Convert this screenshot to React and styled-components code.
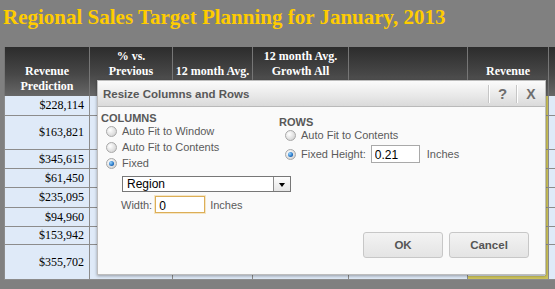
import React from 'react';
import styled, { createGlobalStyle, css } from 'styled-components';

const GlobalStyle = createGlobalStyle`
  html, body {
    margin: 0;
    padding: 0;
    background: #808080;
  }
`;

const Page = styled.div`
  position: relative;
  width: 555px;
  height: 289px;
  overflow: hidden;
  background: #808080;
`;

const Title = styled.h1`
  margin: 5px 0 0 3px;
  font: bold 21px/24px 'Liberation Serif', 'Times New Roman', serif;
  color: #ffcc00;
  white-space: nowrap;
`;

const Grid = styled.div`
  display: grid;
  grid-template-columns: 85px 83px 80px 96px 119px 81px 80px;
  grid-template-rows: 49px 20px 34px 19px 19px 20px 19px 18px 35px;
  width: max-content;
  margin: 18px 0 0 4px;
`;

const HeadCell = styled.div`
  display: flex;
  flex-direction: column;
  justify-content: flex-end;
  align-items: center;
  padding: 0 1px 2px;
  border-left: 1px solid #767676;
  background: linear-gradient(#2c2c2c, #474747 55%, #686868);
  color: #fff;
  font: bold 12px/15px 'Liberation Serif', 'Times New Roman', serif;
  white-space: nowrap;
  overflow: hidden;
`;

const Cell = styled.div`
  display: flex;
  align-items: center;
  justify-content: flex-end;
  padding-right: 5px;
  border-left: 1px solid #8c8c8c;
  border-bottom: 1px solid #8c8c8c;
  background: #dfeaf8;
  color: #000;
  font: 12px 'Liberation Serif', 'Times New Roman', serif;
  white-space: nowrap;
  ${(p) =>
    p.$selected &&
    css`
      box-shadow: inset -3px 0 0 #cfc55c ${p.$last ? ', inset 0 -3px 0 #cfc55c' : ''};
    `}
`;

const Dialog = styled.div`
  position: absolute;
  left: 97px;
  top: 80px;
  width: 449px;
  height: 195px;
  box-sizing: border-box;
  display: flex;
  flex-direction: column;
  background: #fafafa;
  border: 1px solid #bdbdbd;
  box-shadow: 0 1px 3px rgba(0, 0, 0, 0.35);
  font-family: 'Liberation Sans', Arial, sans-serif;
  color: #555;
`;

const TitleBar = styled.div`
  display: flex;
  align-items: center;
  height: 26px;
  box-sizing: border-box;
  padding-left: 5px;
  border-bottom: 1px solid #b9b9b9;
  background: linear-gradient(#fbfbfb, #e8e8e8 60%, #dadada);
`;

const DialogTitle = styled.div`
  flex: 1;
  font-size: 11.5px;
  font-weight: bold;
  color: #585858;
`;

const BarButton = styled.div`
  display: flex;
  align-items: center;
  justify-content: center;
  width: ${(p) => p.$w}px;
  height: 18px;
  border-left: 1px solid #c6c6c6;
  box-shadow: inset 1px 0 0 #fff;
  color: #6e6e6e;
  font-weight: bold;
  font-size: ${(p) => p.$size}px;
`;

const Body = styled.div`
  flex: 1;
  display: grid;
  grid-template-columns: 178px 1fr;
  padding: 6px 0 0 3px;
`;

const Section = styled.div`
  display: flex;
  flex-direction: column;
  padding-top: ${(p) => p.$offset || 0}px;
`;

const Heading = styled.div`
  font-size: 11px;
  line-height: 10px;
  height: 10px;
  font-weight: bold;
  color: #585858;
`;

const OptionRow = styled.label`
  display: flex;
  align-items: center;
  gap: 5px;
  height: ${(p) => p.$h || 16}px;
  margin-top: ${(p) => p.$mt || 0}px;
  padding-left: ${(p) => p.$indent}px;
  font-size: 11px;
  color: #5a5a5a;
  white-space: nowrap;
`;

const Radio = styled.span`
  position: relative;
  flex: none;
  width: 11px;
  height: 11px;
  box-sizing: border-box;
  border-radius: 50%;
  border: 1px solid #a8a8a8;
  background: radial-gradient(circle at 35% 35%, #ffffff, #dcdcdc 65%, #c4c4c4);
  ${(p) =>
    p.$checked &&
    css`
      &::after {
        content: '';
        position: absolute;
        inset: 2px;
        border-radius: 50%;
        background: radial-gradient(circle at 35% 35%, #9ad6ff, #1a6cc0 65%, #0b3d7a);
      }
    `}
`;

const Select = styled.div`
  display: flex;
  width: 169px;
  height: 16px;
  box-sizing: border-box;
  margin: 5px 0 0 21px;
  border: 1px solid #777;
  background: #fff;
`;

const SelectText = styled.span`
  flex: 1;
  padding-left: 4px;
  font-size: 12px;
  line-height: 14px;
  color: #000;
`;

const SelectArrow = styled.span`
  display: flex;
  align-items: center;
  justify-content: center;
  width: 16px;
  border-left: 1px solid #8a8a8a;
  background: linear-gradient(#fdfdfd, #e6e6e6);

  &::before {
    content: '';
    border-left: 3.5px solid transparent;
    border-right: 3.5px solid transparent;
    border-top: 4px solid #000;
    margin-top: 1px;
  }
`;

const FieldRow = styled.div`
  display: flex;
  align-items: center;
  gap: ${(p) => p.$gap || 3}px;
  height: 17px;
  margin: 4px 0 0 20px;
  font-size: 11px;
  color: #5a5a5a;
  white-space: nowrap;
`;

const TextBox = styled.input`
  box-sizing: border-box;
  width: ${(p) => p.$w}px;
  height: ${(p) => p.$h}px;
  margin: 0 2px 0 0;
  padding: 2px 0 0 3px;
  border: 1px solid ${(p) => (p.$focused ? '#dcae57' : '#a9a9a9')};
  box-shadow: ${(p) => (p.$focused ? '0 0 0 1px rgba(240, 205, 130, 0.45)' : 'none')};
  background: #fff;
  color: #000;
  font: 12px 'Liberation Sans', Arial, sans-serif;
  outline: none;
`;

const Footer = styled.div`
  display: flex;
  justify-content: flex-end;
  gap: 6px;
  padding: 0 16px 16px 0;
`;

const Button = styled.button`
  width: 80px;
  height: 26px;
  border: 1px solid #c7c7c7;
  border-radius: 3px;
  background: linear-gradient(#f3f3f3, #e4e4e4);
  color: #555;
  font: bold 11.5px 'Liberation Sans', Arial, sans-serif;
  padding: 0;
`;

// the third header line sits under the dialog, so it stays blank
const BLANK = '\u00a0';

const headers = [
  ['Revenue', 'Prediction'],
  ['% vs.', 'Previous', BLANK],
  ['12 month Avg.', BLANK],
  ['12 month Avg.', 'Growth All', BLANK],
  [BLANK],
  ['Revenue', BLANK],
  [BLANK],
];

const predictions = [
  '$228,114',
  '$163,821',
  '$345,615',
  '$61,450',
  '$235,095',
  '$94,960',
  '$153,942',
  '$355,702',
];

export default function App() {
  return (
    <Page>
      <GlobalStyle />
      <Title>Regional Sales Target Planning for January, 2013</Title>
      <Grid>
        {headers.map((lines, i) => (
          <HeadCell key={i}>
            {lines.map((l, j) => (
              <span key={j}>{l}</span>
            ))}
          </HeadCell>
        ))}
        {predictions.map((value, r) =>
          headers.map((_, c) => (
            <Cell
              key={`${r}-${c}`}
              $selected={c === 5}
              $last={r === predictions.length - 1}
            >
              {c === 0 ? value : ''}
            </Cell>
          ))
        )}
      </Grid>

      <Dialog>
        <TitleBar>
          <DialogTitle>Resize Columns and Rows</DialogTitle>
          <BarButton $w={27} $size={15}>?</BarButton>
          <BarButton $w={28} $size={14}>X</BarButton>
        </TitleBar>
        <Body>
          <Section>
            <Heading>COLUMNS</Heading>
            <OptionRow $indent={5}>
              <Radio />
              Auto Fit to Window
            </OptionRow>
            <OptionRow $indent={5}>
              <Radio />
              Auto Fit to Contents
            </OptionRow>
            <OptionRow $indent={5}>
              <Radio $checked />
              Fixed
            </OptionRow>
            <Select>
              <SelectText>Region</SelectText>
              <SelectArrow />
            </Select>
            <FieldRow>
              Width:
              <TextBox $w={50} $h={17} $focused readOnly value="0" />
              Inches
            </FieldRow>
          </Section>
          <Section $offset={4}>
            <Heading>ROWS</Heading>
            <OptionRow $indent={6}>
              <Radio />
              Auto Fit to Contents
            </OptionRow>
            <OptionRow $indent={6} $h={18} $mt={2}>
              <Radio $checked />
              Fixed Height:
              <TextBox $w={49} $h={18} readOnly value="0.21" />
              Inches
            </OptionRow>
          </Section>
        </Body>
        <Footer>
          <Button>OK</Button>
          <Button>Cancel</Button>
        </Footer>
      </Dialog>
    </Page>
  );
}
